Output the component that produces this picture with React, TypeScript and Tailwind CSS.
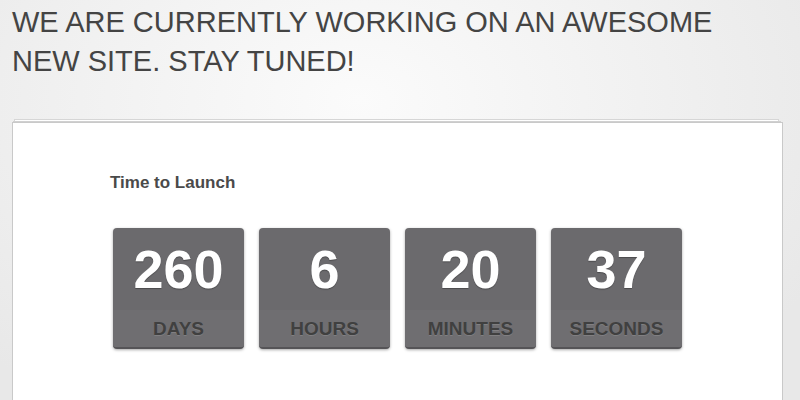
export default function App() {
  const items = [
    { n: "260", l: "DAYS" },
    { n: "6", l: "HOURS" },
    { n: "20", l: "MINUTES" },
    { n: "37", l: "SECONDS" },
  ];
  return (
    <div
      className="w-[800px] h-[400px] overflow-hidden bg-[radial-gradient(ellipse_at_45%_25%,#fbfbfb_0%,#f1f1f1_45%,#e8e8e8_85%)]"
      style={{ fontFamily: '"Liberation Sans", Arial, sans-serif' }}
    >
      <h1 className="pl-[12px] pt-[3px] text-[29px] leading-[39px] text-[#444444] font-normal">
        WE ARE CURRENTLY WORKING ON AN AWESOME
        <br />
        NEW SITE. STAY TUNED!
      </h1>
      <div className="relative ml-[12px] mt-[41px] w-[771px] h-[300px]">
        <div className="absolute left-[2px] right-[4px] top-[-3px] h-[10px] bg-white border-t border-x border-[#d6d6d6]" />
        <div className="absolute left-[1px] right-[2px] top-[-1.5px] h-[10px] bg-white border-t border-x border-[#d0d0d0]" />
        <div className="relative h-full bg-white border-t border-x border-[#c9c9c9] pl-[97px] pt-[50px]">
          <div className="text-[17px] leading-[20px] font-bold text-[#4a4a4a]">Time to Launch</div>
          <div className="mt-[35px] ml-[3px] flex gap-[15px]">
            {items.map((it) => (
              <div
                key={it.l}
                className="w-[131px] h-[121px] rounded-[4px] bg-[#6b6a6d] shadow-[0_1px_3px_rgba(0,0,0,0.35)] border-b-2 border-[#555457] overflow-hidden flex flex-col"
              >
                <div className="h-[82px] pt-[14px] text-center text-[54px] leading-[54px] font-bold text-white [text-shadow:0_1px_1px_rgba(0,0,0,0.3)]">
                  {it.n}
                </div>
                <div className="flex-1 bg-[#6f6e71] pt-[9px] text-center text-[19px] leading-[20px] font-bold text-[#404040] [text-shadow:0_1px_0_rgba(255,255,255,0.12)]">
                  {it.l}
                </div>
              </div>
            ))}
          </div>
        </div>
      </div>
    </div>
  );
}
